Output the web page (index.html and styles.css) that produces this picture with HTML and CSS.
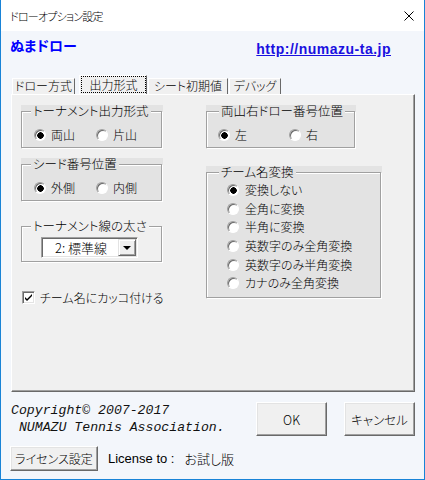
FILE: index.html
```html
<!DOCTYPE html>
<html lang="ja">
<head>
<meta charset="utf-8">
<title>ドローオプション設定</title>
<link rel="stylesheet" href="styles.css">
</head>
<body>
<div class="window">
  <div class="titlebar">
    <span class="title">ドローオプション設定</span>
    <svg class="close" width="10" height="10" viewBox="0 0 10 10"><path d="M0.5 0.5 L9.5 9.5 M9.5 0.5 L0.5 9.5" stroke="#000" stroke-width="1" fill="none"/></svg>
  </div>
  <div class="client">
    <div class="header">
      <span class="app-name">ぬまドロー</span>
      <a class="site">http://numazu-ta.jp</a>
    </div>
    <div class="tabs">
      <div class="tab t1">ドロー方式</div>
      <div class="tab t2 active"><span class="focus">出力形式</span></div>
      <div class="tab t3">シート初期値</div>
      <div class="tab t4">デバッグ</div>
    </div>
    <div class="panel">
      <div class="col">
        <div class="frame">
          <fieldset class="box">
            <legend>トーナメント出力形式</legend>
            <div class="opts">
              <div class="opt w62"><span class="radio on"></span>両山</div>
              <div class="opt"><span class="radio"></span>片山</div>
            </div>
          </fieldset>
        </div>
        <div class="frame f2">
          <fieldset class="box">
            <legend>シード番号位置</legend>
            <div class="opts">
              <div class="opt w62"><span class="radio on"></span>外側</div>
              <div class="opt"><span class="radio"></span>内側</div>
            </div>
          </fieldset>
        </div>
        <div class="frame plain f3">
          <fieldset class="box">
            <legend>トーナメント線の太さ</legend>
            <div class="combo">
              <span class="combo-text">2: 標準線</span>
              <span class="combo-btn"><span class="tri"></span></span>
            </div>
          </fieldset>
        </div>
        <div class="check">
          <span class="cbox"><svg width="9" height="9" viewBox="0 0 9 9"><path d="M1 4 L3 6 L8 1 L8 3 L3 8 L1 6 Z" fill="#000"/></svg></span>
          チーム名にカッコ付ける
        </div>
      </div>
      <div class="col">
        <div class="frame fa">
          <fieldset class="box">
            <legend>両山右ドロー番号位置</legend>
            <div class="opts">
              <div class="opt w71"><span class="radio on"></span>左</div>
              <div class="opt"><span class="radio"></span>右</div>
            </div>
          </fieldset>
        </div>
        <div class="frame fb">
          <fieldset class="box">
            <legend>チーム名変換</legend>
            <div class="list">
              <div class="opt row"><span class="radio on"></span>変換しない</div>
              <div class="opt row"><span class="radio"></span>全角に変換</div>
              <div class="opt row"><span class="radio"></span>半角に変換</div>
              <div class="opt row"><span class="radio"></span>英数字のみ全角変換</div>
              <div class="opt row"><span class="radio"></span>英数字のみ半角変換</div>
              <div class="opt row"><span class="radio"></span>カナのみ全角変換</div>
            </div>
          </fieldset>
        </div>
      </div>
    </div>
    <div class="footer-top">
      <div class="copyright">Copyright© 2007-2017
 NUMAZU Tennis Association.</div>
      <div class="buttons">
        <button class="btn">OK</button>
        <button class="btn">キャンセル</button>
      </div>
    </div>
    <div class="license-row">
      <button class="btn lic">ライセンス設定</button>
      <span class="lic-label">License to :</span>
      <span class="lic-value">お試し版</span>
    </div>
  </div>
</div>
</body>
</html>
```
FILE: styles.css
```css
* { box-sizing: border-box; }
body {
  margin: 0;
  font-family: "Noto Sans CJK JP", sans-serif;
  font-size: 12px;
  font-weight: 300;
  font-feature-settings: "palt";
  color: #000;
}
.window {
  width: 425px;
  height: 480px;
  border: 1px solid #1883d7;
  border-top: 0;
  display: flex;
  flex-direction: column;
  background: #f3f6fb;
}
.titlebar {
  height: 31px;
  flex: none;
  background: #fff;
  display: flex;
  align-items: center;
  justify-content: space-between;
  padding: 0 10px 0 9px;
}
.title { font-size: 11px; line-height: 16px; letter-spacing: -0.8px; }
.close { display: block; }
.client { flex: 1; display: flex; flex-direction: column; }
.header {
  height: 44px;
  display: flex;
  align-items: flex-start;
  padding: 6px 33px 0 9px;
}
.app-name {
  color: #0000ff;
  font-weight: bold;
  font-size: 14px;
  line-height: 16px;
}
.site {
  margin-left: auto;
  margin-top: 4px;
  font-family: "Liberation Sans", Arial, sans-serif;
  font-weight: bold;
  font-size: 14px;
  line-height: 16px;
  letter-spacing: 0.5px;
  color: #1a10e0;
  text-decoration: underline;
}
.tabs {
  height: 19px;
  display: flex;
  align-items: flex-end;
  padding-left: 11px;
}
.tab {
  height: 16px;
  line-height: 14px;
  background: #f0f0f0;
  border-top: 1px solid #fff;
  border-left: 1px solid #fff;
  border-right: 1px solid #696969;
  text-align: center;
  white-space: nowrap;
}
.t1 { width: 63px; }
.t2 { width: 68px; margin-left: 4px; }
.t3 { width: 80px; margin-left: 1px; }
.t4 { width: 52px; margin-left: 1px; }
.tab.active { height: 19px; }
.focus {
  display: block;
  height: 17px;
  margin-left: 1px;
  border: 1px dotted #000;
  line-height: 15px;
}
.panel {
  margin-left: 10px;
  width: 404px;
  height: 298px;
  flex: none;
  background: #f0f0f0;
  border: 1px solid;
  border-color: #fff #696969 #696969 #fff;
  box-shadow: inset -1px -1px 0 #a0a0a0;
  padding: 10px 0 0 9px;
  display: grid;
  grid-template-columns: 142px 176px;
  column-gap: 43px;
  align-items: start;
}
.col { display: flex; flex-direction: column; }
.frame { background: #e3e3e3; height: 44px; }
.f2 { margin-top: 9px; }
.f3 { margin-top: 18px; height: 43px; }
.frame.plain { background: transparent; }
.fa { width: 150px; }
.fb { margin-top: 17px; height: 133px; }
.box {
  margin: 0;
  padding: 0;
  border: 1px solid #a0a0a0;
  box-shadow: inset 1px 1px 0 #fff, 1px 1px 0 #fff;
  width: calc(100% - 1px);
  height: calc(100% - 1px);
  min-inline-size: 0;
}
legend {
  padding: 0 2px;
  margin-left: 9px;
  line-height: 12px;
  height: 12px;
  font-size: 12.5px;
  background: #e3e3e3;
  white-space: nowrap;
}
.fa legend, .fb legend { margin-left: 12px; }
.plain legend { background: #f0f0f0; }
.opts { display: flex; margin-top: 10px; padding-left: 12px; }
.fa .opts { padding-left: 11px; }
.opt {
  display: flex;
  align-items: center;
  gap: 5px;
  height: 16px;
  line-height: 16px;
  white-space: nowrap;
}
.w62 { width: 62px; }
.w71 { width: 71px; }
.radio {
  width: 12px;
  height: 12px;
  flex: none;
  border-radius: 50%;
  border: 1px solid;
  border-color: #a0a0a0 #fff #fff #a0a0a0;
  background: #fff;
  box-shadow: inset 1px 1px 0 #696969;
}
.radio.on {
  background: radial-gradient(circle at 55% 55%, #000 0 3px, #fff 3.5px);
}
.list { display: flex; flex-direction: column; padding: 3px 0 0 20px; }
.list .row { height: 18.6px; gap: 6px; }
.combo {
  display: flex;
  align-items: center;
  width: 97px;
  height: 21px;
  margin: 5px 0 0 19px;
  background: #fff;
  border: 1px solid;
  border-color: #a0a0a0 #fff #fff #a0a0a0;
  box-shadow: inset 1px 1px 0 #696969, inset -1px -1px 0 #e3e3e3;
  padding: 1px 1px 1px 2px;
}
.combo-text {
  flex: 1;
  font-size: 13px;
  line-height: 17px;
  text-align: center;
  white-space: nowrap;
}
.combo-btn {
  width: 18px;
  height: 17px;
  display: flex;
  align-items: center;
  justify-content: center;
  background: #f0f0f0;
  border: 1px solid;
  border-color: #e3e3e3 #696969 #696969 #e3e3e3;
  box-shadow: inset 1px 1px 0 #fff, inset -1px -1px 0 #a0a0a0;
}
.tri {
  width: 0;
  height: 0;
  border-left: 4px solid transparent;
  border-right: 4px solid transparent;
  border-top: 4px solid #000;
}
.check {
  display: flex;
  align-items: center;
  gap: 5px;
  height: 16px;
  margin: 26px 0 0 1px;
  white-space: nowrap;
}
.cbox {
  width: 13px;
  height: 13px;
  flex: none;
  display: flex;
  align-items: center;
  justify-content: center;
  background: #fff;
  border: 1px solid;
  border-color: #a0a0a0 #fff #fff #a0a0a0;
  box-shadow: inset 1px 1px 0 #696969, inset -1px -1px 0 #e3e3e3;
}
.cbox svg { display: block; }
.footer-top {
  display: flex;
  margin-top: 10px;
  padding: 0 9px 0 10px;
}
.copyright {
  flex: 1;
  font-family: "Liberation Mono", "Courier New", monospace;
  font-style: italic;
  font-weight: normal;
  font-size: 13.2px;
  line-height: 17px;
  white-space: pre;
  color: #111;
}
.buttons { display: flex; gap: 17px; }
.btn {
  width: 71px;
  height: 34px;
  margin: 0;
  padding: 0;
  font-family: "Noto Sans CJK JP", sans-serif;
  font-feature-settings: "palt";
  font-weight: 300;
  font-size: 12.5px;
  color: #000;
  background: #f0f0f0;
  border: 1px solid;
  border-color: #fff #696969 #696969 #fff;
  box-shadow: inset -1px -1px 0 #a0a0a0, inset 1px 1px 0 #e3e3e3;
}
.license-row {
  display: flex;
  align-items: center;
  gap: 10px;
  margin-top: 10px;
  padding-left: 9px;
}
.btn.lic { width: 88px; height: 25px; font-size: 12px; }
.lic-label {
  font-family: "Liberation Sans", Arial, sans-serif;
  font-weight: normal;
  font-size: 13px;
  line-height: 16px;
}
.lic-value { font-size: 13px; line-height: 16px; }
```
